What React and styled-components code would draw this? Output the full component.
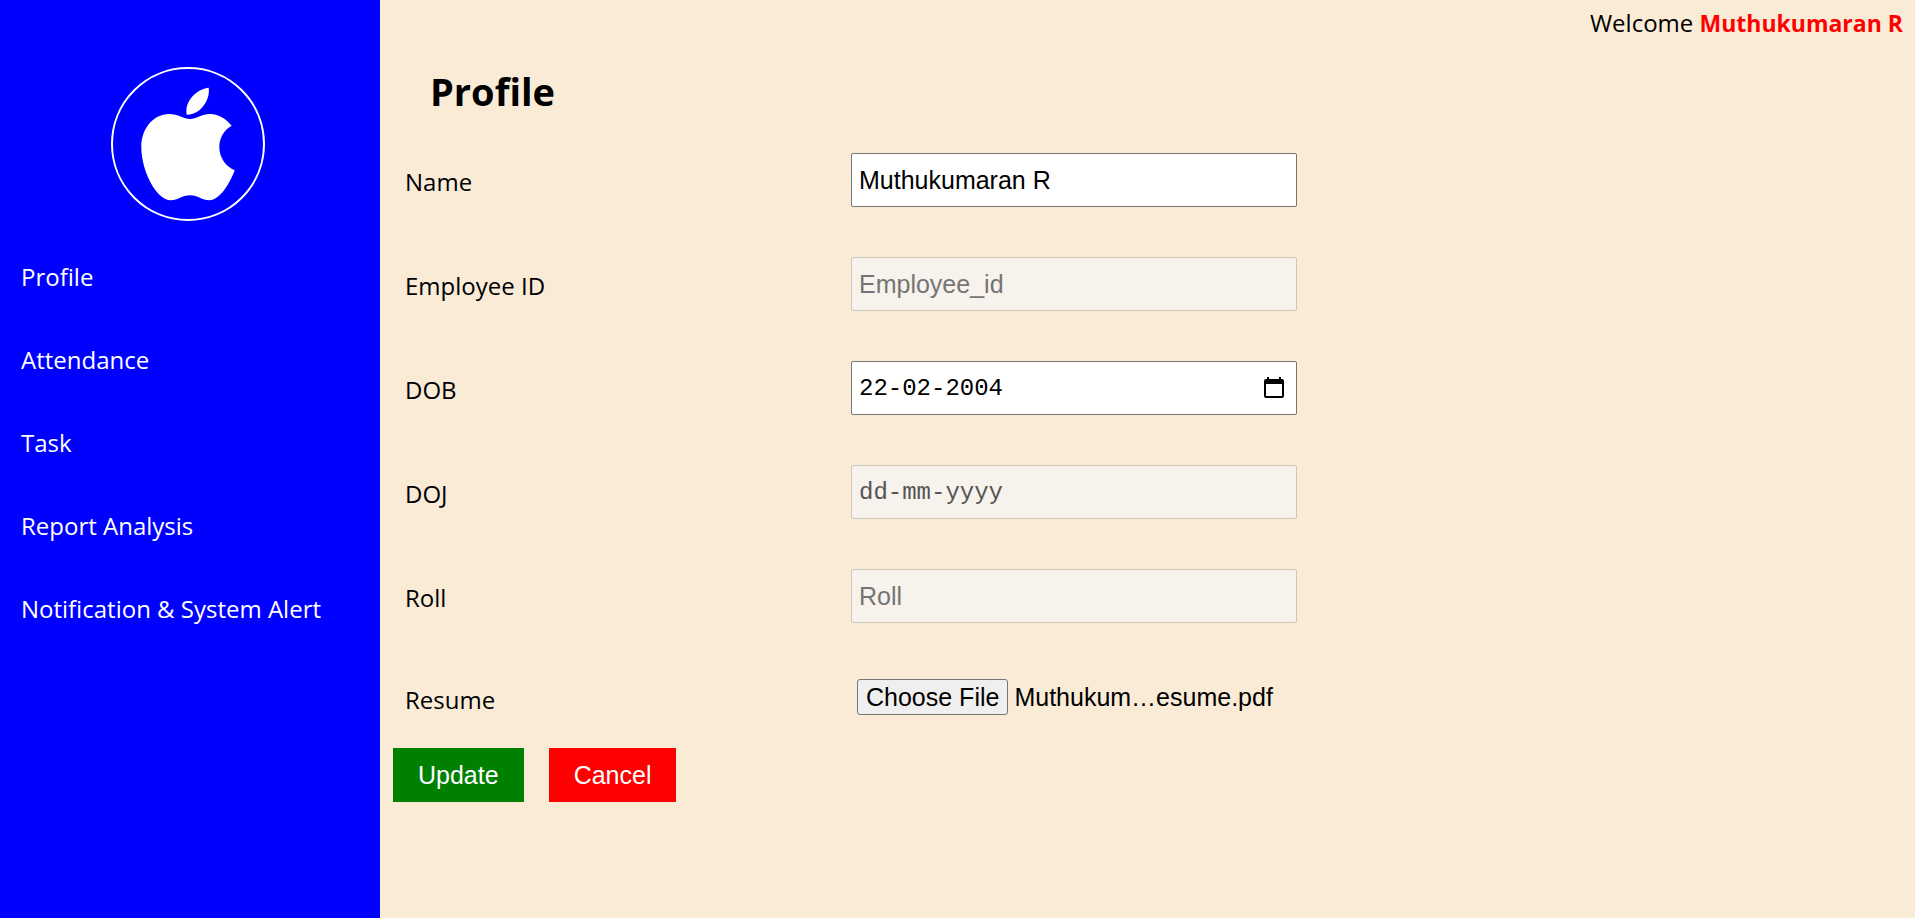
import React, { useRef, useState } from "react";
import styled, { createGlobalStyle } from "styled-components";

const GlobalStyle = createGlobalStyle`
  *, *::before, *::after { box-sizing: border-box; }
  body {
    margin: 0;
    background: antiquewhite;
    color: #000;
    font-family: "Segoe UI", "Open Sans", "Noto Sans", sans-serif;
    font-size: 24px;
    line-height: 33px;
  }
`;

const Page = styled.div`
  display: flex;
  min-height: 100vh;
`;

const Sidebar = styled.aside`
  flex: 0 0 380px;
  display: flex;
  flex-direction: column;
  gap: 39px;
  padding: 67px 25px 50px 21px;
  background: #00f;
  color: #fff;
`;

const Logo = styled.div`
  align-self: center;
  width: 154px;
  height: 154px;
  border: 2px solid #fff;
  border-radius: 50%;

  svg { display: block; }
`;

const Nav = styled.nav`
  display: flex;
  flex-direction: column;
  align-items: flex-start;
  gap: 50px;
`;

const NavLink = styled.a`
  color: inherit;
  text-decoration: none;
`;

const Main = styled.main`
  flex: 1;
  min-width: 0;
`;

const Header = styled.header`
  padding: 6px 12px;
  text-align: right;
`;

const UserName = styled.strong`
  color: red;
  font-size: 23px;
  font-weight: 700;
`;

const Title = styled.h1`
  margin: 18px 50px 35px;
  font-size: 38px;
  line-height: 54px;
  font-weight: 700;
`;

const Form = styled.form`
  display: flex;
  flex-direction: column;
  gap: 50px;
  max-width: 942px;
  padding: 0 25px;
`;

const Row = styled.div`
  display: grid;
  grid-template-columns: 1fr 1fr;
  align-items: center;
  min-height: 50px;
`;

const Label = styled.label`
  padding-top: 2px;
`;

const Field = styled.div`
  display: flex;
  align-items: center;
  height: 54px;
  padding: 0 12px 0 7px;
  border: 1px solid ${(p) => (p.$disabled ? "#cfc7be" : "#767676")};
  border-radius: 2px;
  background: ${(p) => (p.$disabled ? "#f7f2eb" : "#fff")};
`;

const Input = styled.input`
  flex: 1;
  min-width: 0;
  padding: 0;
  border: 0;
  outline: 0;
  background: transparent;
  color: #000;
  font-family: ${(p) =>
    p.$mono
      ? '"Consolas", "Liberation Mono", monospace'
      : '"Arial", "Liberation Sans", sans-serif'};
  font-size: ${(p) => (p.$mono ? "24px" : "25px")};
  line-height: 29px;

  &::placeholder {
    color: ${(p) => (p.$mono ? "#545454" : "#757575")};
    opacity: 1;
  }
`;

const PickerButton = styled.button`
  display: flex;
  padding: 0;
  border: 0;
  background: none;
  color: #000;
`;

const FilePicker = styled.div`
  display: flex;
  align-items: center;
  gap: 6px;
  padding: 0 0 2px 6px;
  font-family: "Arial", "Liberation Sans", sans-serif;
  font-size: 25px;
  line-height: 29px;
`;

const HiddenFile = styled.input`
  display: none;
`;

const FileButton = styled.button`
  height: 36px;
  padding: 0 8px;
  border: 1px solid #767676;
  border-radius: 3px;
  background: #efefef;
  color: #000;
  font: inherit;
  white-space: nowrap;
`;

const Actions = styled.div`
  display: flex;
  gap: 25px;
  padding: 25px 13px;
`;

const ActionButton = styled.button`
  height: 54px;
  padding: 0 25px;
  border: 0;
  background: ${(p) => p.$color};
  color: #fff;
  font-family: "Arial", "Liberation Sans", sans-serif;
  font-size: 25px;
  line-height: 29px;
`;

const AppleMark = () => (
  <svg width="150" height="150" viewBox="2 2 150 150" fill="#fff" aria-hidden="true">
    <path d="M97.7 20.7C86 22 73 34 75.7 47.7C89 48 99.5 33 97.7 20.7Z" />
    <path d="M120.7 58.7C114 51 107 47 99 47C91 47 85 52 79 52C73 52 67 47 58 47C43 47 30.3 61 30.3 79.7C30.3 105 46 133.3 59.7 133.3C67 133.3 71 128.3 79 128.3C87 128.3 91 133.3 98.3 133.3C109 133.3 119 116 123.7 103.3C114 99 108.3 90 108.3 79.7C108.3 71 113 63 120.7 58.7Z" />
  </svg>
);

const CalendarIcon = () => (
  <svg width="20" height="22" viewBox="0 0 20 22" aria-hidden="true">
    <path
      fill="currentColor"
      fillRule="evenodd"
      d="M3 0h2v2h10V0h2v2h1a2 2 0 0 1 2 2v15a2 2 0 0 1-2 2H2a2 2 0 0 1-2-2V4a2 2 0 0 1 2-2h1zM2 7v12h16V7z"
    />
  </svg>
);

const links = ["Profile", "Attendance", "Task", "Report Analysis", "Notification & System Alert"];

const fields = [
  { id: "name", label: "Name", value: "Muthukumaran R" },
  { id: "employee", label: "Employee ID", placeholder: "Employee_id", disabled: true },
  { id: "dob", label: "DOB", value: "22-02-2004", date: true },
  { id: "doj", label: "DOJ", placeholder: "dd-mm-yyyy", date: true, disabled: true },
  { id: "roll", label: "Roll", placeholder: "Roll", disabled: true },
];

export default function App() {
  const fileRef = useRef(null);
  const [fileName, setFileName] = useState("Muthukum…esume.pdf");

  return (
    <Page>
      <GlobalStyle />
      <Sidebar>
        <Logo>
          <AppleMark />
        </Logo>
        <Nav>
          {links.map((text) => (
            <NavLink key={text} href="#">{text}</NavLink>
          ))}
        </Nav>
      </Sidebar>
      <Main>
        <Header>
          Welcome <UserName>Muthukumaran R</UserName>
        </Header>
        <Title>Profile</Title>
        <Form id="profile" onSubmit={(e) => e.preventDefault()}>
          {fields.map((f) => (
            <Row key={f.id}>
              <Label htmlFor={f.id}>{f.label}</Label>
              <Field $disabled={f.disabled}>
                <Input
                  id={f.id}
                  type="text"
                  $mono={f.date}
                  defaultValue={f.value}
                  placeholder={f.placeholder}
                  disabled={f.disabled}
                />
                {f.date && !f.disabled && (
                  <PickerButton type="button" aria-label="Show date picker">
                    <CalendarIcon />
                  </PickerButton>
                )}
              </Field>
            </Row>
          ))}
          <Row>
            <Label htmlFor="resume">Resume</Label>
            <FilePicker>
              <HiddenFile
                ref={fileRef}
                id="resume"
                type="file"
                onChange={(e) => e.target.files[0] && setFileName(e.target.files[0].name)}
              />
              <FileButton type="button" onClick={() => fileRef.current.click()}>
                Choose File
              </FileButton>
              <span>{fileName}</span>
            </FilePicker>
          </Row>
        </Form>
        <Actions>
          <ActionButton type="submit" form="profile" $color="green">Update</ActionButton>
          <ActionButton type="button" $color="red">Cancel</ActionButton>
        </Actions>
      </Main>
    </Page>
  );
}
